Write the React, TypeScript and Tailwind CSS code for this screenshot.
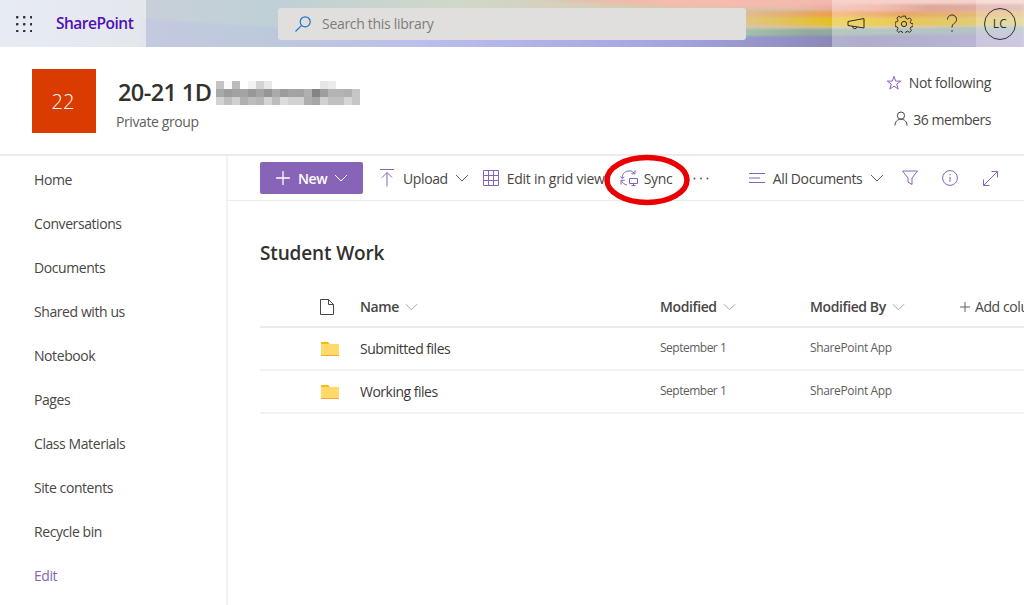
import { Plus } from "lucide-react";

const navItems = [
  "Home",
  "Conversations",
  "Documents",
  "Shared with us",
  "Notebook",
  "Pages",
  "Class Materials",
  "Site contents",
  "Recycle bin",
];

const rows = [
  { name: "Submitted files", modified: "September 1", by: "SharePoint App" },
  { name: "Working files", modified: "September 1", by: "SharePoint App" },
];

// mosaic over the redacted part of the site title (8px cells)
const mosaic = [
  ["#c4c4c4", "#fafafa", "#bcbcbc", "#ffffff", "#f2f2f2", "#d4d4d4", "#e8e8e8", "#ffffff", "#ffffff", "#ffffff", "#ffffff", "#ffffff", "#ffffff", "#e6e6e6", "#ececec", "#ffffff", "#ffffff", "#ffffff"],
  ["#a8a8a8", "#9c9c9c", "#a2a2a2", "#a4a4a4", "#989898", "#a4a4a4", "#969696", "#aaaaaa", "#9c9c9c", "#a4a4a4", "#a2a2a2", "#b0b0b0", "#848484", "#9e9e9e", "#b4b4b4", "#b4b4b4", "#b0b0b0", "#c6c6c6"],
  ["#d2d2d2", "#bebebe", "#d0d0d0", "#b0b0b0", "#bcbcbc", "#b6b6b6", "#d4d4d4", "#bcbcbc", "#dcdcdc", "#d2d2d2", "#d2d2d2", "#aeaeae", "#a6a6a6", "#d0d0d0", "#c0c0c0", "#c0c0c0", "#d6d6d6", "#c6c6c6"],
];

function HeaderArt() {
  return (
    <svg className="absolute inset-0" width="1024" height="47" viewBox="0 0 1024 47">
      <defs>
        <linearGradient id="base" x1="0" x2="1" y1="0" y2="0">
          <stop offset="0" stopColor="#cfd6e6" />
          <stop offset="0.14" stopColor="#c8d0da" />
          <stop offset="0.27" stopColor="#bfd0d6" />
          <stop offset="0.45" stopColor="#d0d8c8" />
          <stop offset="0.7" stopColor="#dcc4a8" />
          <stop offset="1" stopColor="#c8b8b0" />
        </linearGradient>
        <linearGradient id="warm" x1="0" x2="1" y1="0" y2="0">
          <stop offset="0.35" stopColor="#f0a890" stopOpacity="0" />
          <stop offset="0.6" stopColor="#f6bcae" />
          <stop offset="1" stopColor="#eeb8b0" />
        </linearGradient>
        <linearGradient id="salmon" x1="0" x2="1" y1="0" y2="0">
          <stop offset="0.55" stopColor="#f0a090" stopOpacity="0" />
          <stop offset="0.72" stopColor="#ee9c88" />
          <stop offset="0.82" stopColor="#cf7a68" />
          <stop offset="1" stopColor="#c88878" />
        </linearGradient>
        <linearGradient id="orange" x1="0" x2="1" y1="0" y2="0">
          <stop offset="0.5" stopColor="#eea050" stopOpacity="0" />
          <stop offset="0.7" stopColor="#f09c40" />
          <stop offset="0.8" stopColor="#dc7a1c" />
          <stop offset="1" stopColor="#dca040" />
        </linearGradient>
        <linearGradient id="gold" x1="0" x2="1" y1="0" y2="0">
          <stop offset="0.42" stopColor="#e8d060" stopOpacity="0" />
          <stop offset="0.7" stopColor="#e6be08" />
          <stop offset="0.81" stopColor="#dca800" />
          <stop offset="1" stopColor="#c8b850" />
        </linearGradient>
        <linearGradient id="teal" x1="0" x2="1" y1="0" y2="0">
          <stop offset="0.14" stopColor="#a8e0dc" stopOpacity="0" />
          <stop offset="0.27" stopColor="#aee6de" />
          <stop offset="0.55" stopColor="#b8f0c8" />
          <stop offset="0.75" stopColor="#92ac9c" />
          <stop offset="1" stopColor="#8aa0a8" />
        </linearGradient>
        <linearGradient id="lav" x1="0" x2="1" y1="0" y2="0">
          <stop offset="0.14" stopColor="#b8b8e8" stopOpacity="0.3" />
          <stop offset="0.3" stopColor="#bcc0ec" />
          <stop offset="0.6" stopColor="#a4a4e0" />
          <stop offset="0.82" stopColor="#8682b0" />
          <stop offset="1" stopColor="#9a92c4" />
        </linearGradient>
        <filter id="soft">
          <feGaussianBlur stdDeviation="0.9" />
        </filter>
      </defs>
      <rect width="1024" height="47" fill="url(#base)" />
      <g filter="url(#soft)">
        <path d="M140 -2 L1024 -2 L1024 8 C 860 8 660 10 520 -2 Z" fill="url(#warm)" />
        <path d="M500 -2 C 620 6 720 4 1024 4 L1024 14 C 860 14 680 14 500 -2 Z" fill="url(#salmon)" />
        <path d="M420 -2 C 560 8 680 12 1024 11 L1024 19 C 820 20 620 18 420 -2 Z" fill="url(#orange)" />
        <path d="M440 0 C 580 12 700 19 1024 17 L1024 26 C 820 28 620 28 440 0 Z" fill="url(#gold)" />
        <path d="M150 4 C 260 18 420 36 1024 26 L1024 36 C 700 42 340 44 150 12 Z" fill="url(#teal)" />
        <path d="M140 18 C 280 30 520 42 1024 33 L1024 50 L140 50 Z" fill="url(#lav)" />
      </g>
      <rect width="146" height="47" fill="#ffffff" fillOpacity="0.5" />
      <rect x="832" width="144" height="47" fill="#ffffff" fillOpacity="0.35" />
      <rect x="976" width="48" height="47" fill="#ffffff" fillOpacity="0.5" />
    </svg>
  );
}

function Waffle() {
  return (
    <svg width="16" height="16" viewBox="0 0 16 16" fill="#323130">
      {[1, 8, 15].map((y) =>
        [1, 8, 15].map((x) => <rect key={`${x}-${y}`} x={x - 1} y={y - 1} width="2.4" height="2.4" rx="0.6" />)
      )}
    </svg>
  );
}

function Line({ w, h, children, color = "#8764b8" }: { w: number; h: number; children: React.ReactNode; color?: string }) {
  return (
    <svg width={w} height={h} viewBox={`0 0 ${w} ${h}`} fill="none" stroke={color} strokeWidth="1" className="shrink-0">
      {children}
    </svg>
  );
}

function Chevron({ color = "#605e5c", size = 14 }: { color?: string; size?: number }) {
  return (
    <svg width={size} height="8" viewBox="0 0 14 8" fill="none" stroke={color} strokeWidth="1" className="shrink-0">
      <path d="M1 1l6 6 6-6" />
    </svg>
  );
}

export default function App() {
  return (
    <div className="relative h-[605px] w-[1024px] overflow-hidden bg-white font-['Open_Sans',sans-serif] text-[#323130]">
      {/* Suite bar */}
      <header className="relative flex h-[47px] items-center overflow-hidden">
        <HeaderArt />
        <div className="relative ml-[16px]">
          <Waffle />
        </div>
        <span className="relative ml-[24px] w-[222px] text-[15.5px] font-semibold tracking-[-0.5px] text-[#4f10b4]">SharePoint</span>
        <div className="relative flex h-[32px] w-[468px] items-center rounded-[3px] bg-[#e0dfdd]">
          <svg width="18" height="18" viewBox="0 0 18 18" fill="none" stroke="#1b78c8" strokeWidth="1.2" className="ml-[16px]">
            <circle cx="11.2" cy="6.8" r="5" />
            <path d="M7.6 10.4L1.5 16.5" />
          </svg>
          <span className="ml-[10px] text-[14px] tracking-[-0.3px] text-[#7d7c7a]">Search this library</span>
        </div>
        <div className="relative ml-auto flex items-center">
          <svg width="18" height="14" viewBox="0 0 18 14" fill="none" stroke="#2b2a29" strokeWidth="1" className="mr-[30px]">
            <path d="M1 4.5L17 1.5V11L1 8.5Z M5.5 9.5A2.3 2.3 0 0 0 10 10" />
          </svg>
          <svg width="18" height="18" viewBox="0 0 24 24" fill="none" stroke="#2b2a29" strokeWidth="1.3" className="mr-[33px]">
            <circle cx="12" cy="12" r="3.5" />
            <path d="M10.2 1.5h3.6l.6 3 2.2 1 2.6-1.6 2.5 2.5-1.6 2.6.9 2.1 3 .7v3.5l-3 .7-.9 2.2 1.6 2.6-2.5 2.4-2.6-1.6-2.2.9-.6 3h-3.6l-.7-3-2.1-.9-2.6 1.6-2.5-2.4 1.6-2.6-.9-2.2-3-.7V9.6l3-.7.9-2.1-1.6-2.6 2.5-2.5 2.6 1.6 2.1-1z" transform="translate(0.2 0) scale(1)" />
          </svg>
          <svg width="12" height="19" viewBox="0 0 12 19" fill="none" stroke="#2b2a29" strokeWidth="1" className="mr-[26px]">
            <path d="M1.5 5.5A4.5 4.5 0 1 1 8.5 9.2C7 10.2 6 11 6 13.5" />
            <circle cx="6" cy="17" r="0.8" fill="#2b2a29" stroke="none" />
          </svg>
          <div className="mr-[8px] flex size-[32px] items-center justify-center rounded-full border border-[#323130] text-[12px] tracking-[0.3px]">LC</div>
        </div>
      </header>

      {/* Site header */}
      <div className="flex h-[109px] border-b-2 border-[#edebe9] pl-[32px] pt-[22px]">
        <div className="flex size-[64px] shrink-0 items-center justify-center bg-[#da3b01] pr-[2px] pt-[2px] text-[20px] font-light text-white">22</div>
        <div className="ml-[22px]">
          <div className="flex items-center">
            <span className="mt-[2px] text-[23.5px] font-semibold leading-[42px] tracking-[-0.6px] text-[#323130]">20-21 1D</span>
            <svg width="144" height="24" className="ml-[5px] mt-[4px]" shapeRendering="crispEdges">
              {mosaic.map((row, y) =>
                row.map((c, x) => <rect key={`${x}-${y}`} x={x * 8} y={y * 8} width="8" height="8" fill={c} />)
              )}
            </svg>
          </div>
          <div className="-ml-[2px] -mt-[2px] text-[14px] tracking-[-0.4px] text-[#605e5c]">Private group</div>
        </div>
        <div className="ml-auto mr-[33px] flex flex-col items-end pt-[3px] text-[14px] tracking-[-0.35px] text-[#484644]">
          <div className="flex h-[20px] items-center">
            <svg width="16" height="16" viewBox="0 0 16 16" fill="none" stroke="#8764b8" strokeWidth="1" className="mr-[7px] mt-[2px]">
              <path d="M8 1.3l1.7 4.8h5l-4 3 1.5 5-4.2-3-4.2 3 1.5-5-4-3h5z" />
            </svg>
            Not following
          </div>
          <div className="mt-[17px] flex h-[20px] items-center tracking-[-0.45px]">
            <svg width="14" height="15" viewBox="0 0 14 15" fill="none" stroke="#484644" strokeWidth="1" className="mr-[5px] -mt-[2px]">
              <circle cx="7" cy="4.6" r="3.6" />
              <path d="M1 14.5c0-3.8 2.4-6.3 6-6.3s6 2.5 6 6.3" />
            </svg>
            36 members
          </div>
        </div>
      </div>

      <div className="flex">
        {/* Left nav */}
        <nav className="h-[449px] w-[228px] shrink-0 border-r-2 border-[#f3f2f1] pt-[1px]">
          {navItems.map((item) => (
            <div key={item} className="flex h-[44px] items-center pl-[34px] text-[14px] tracking-[-0.42px] text-[#484644]">
              {item}
            </div>
          ))}
          <div className="flex h-[44px] items-center pl-[34px] text-[14px] tracking-[-0.42px] text-[#8764b8]">Edit</div>
        </nav>

        <main className="min-w-0 flex-1">
          {/* Command bar */}
          <div className="flex h-[45px] items-center border-b border-[#edebe9] pl-[32px] text-[14px] tracking-[-0.38px] text-[#484644]">
            <button className="flex h-[32px] w-[103px] shrink-0 items-center rounded-[2px] bg-[#8764b8] pl-[12px] font-semibold text-white">
              <Plus size={22} strokeWidth={1.4} />
              <span className="ml-[4px]">New</span>
              <span className="ml-[7px]"><Chevron color="#ffffff" /></span>
            </button>
            <span className="ml-[17px]">
              <Line w={14} h={18}>
                <path d="M0 .5h14M7 17.5V3.5M2 8.5l5-5 5 5" />
              </Line>
            </span>
            <span className="ml-[9px]">Upload</span>
            <span className="ml-[7px]"><Chevron /></span>
            <span className="ml-[14px]">
              <Line w={16} h={16}>
                <path d="M.5.5h15v15H.5zM.5 5.5h15M.5 10.5h15M5.5 .5v15M10.5 .5v15" />
              </Line>
            </span>
            <span className="ml-[8px] w-[113px] whitespace-nowrap tracking-[-0.28px]">Edit in grid view</span>
            <Line w={18} h={16}>
              <path d="M2.2 8A7 7 0 0 1 14.5 3.2M15 .2v3.6h-3.6" />
              <path d="M.5 6.5L2.2 8.6 4.2 6.8" />
              <path d="M1.5 10.5c.9 2.4 3 4.2 5.5 4.5M1 14.6v-4.3h3.8" />
              <path d="M9.5 8.5h8v5h-8zM13.5 13.5v2M11.5 15.5h4" />
            </Line>
            <span className="ml-[6px] w-[49px]">Sync</span>
            <span className="w-[56px] text-[#605e5c]">
              <svg width="16" height="3" viewBox="0 0 16 3" fill="#605e5c">
                <circle cx="1.5" cy="1.5" r="1" />
                <circle cx="8" cy="1.5" r="1" />
                <circle cx="14.5" cy="1.5" r="1" />
              </svg>
            </span>
            <Line w={16} h={12}>
              <path d="M0 1.5h16M0 6h11M0 10.5h16" />
            </Line>
            <span className="ml-[8px]">All Documents</span>
            <span className="ml-[8px]"><Chevron /></span>
            <span className="ml-[18px]">
              <Line w={16} h={16}>
                <path d="M.5 1h15L10 8v6.5l-4-2.5V8z" />
              </Line>
            </span>
            <span className="ml-[24px]">
              <Line w={16} h={16}>
                <circle cx="8" cy="8" r="7.4" />
                <path d="M8 7v5M8 4v1.4" />
              </Line>
            </span>
            <span className="ml-[25px]">
              <Line w={15} h={15}>
                <path d="M14.5 .5L.5 14.5M8.5 .5h6v6M.5 8.5v6h6" />
              </Line>
            </span>
          </div>

          {/* Library */}
          <div className="pl-[32px]">
            <h1 className="mt-[37px] h-[30px] text-[19px] font-semibold leading-[30px] tracking-[-0.15px] text-[#323130]">Student Work</h1>
            <div className="mt-[21px] flex h-[39px] items-center border-b-2 border-[#edebe9] pb-[2px] text-[14px] font-semibold tracking-[-0.4px] text-[#484644]">
              <span className="ml-[60px] w-[40px] shrink-0">
                <svg width="14" height="16" viewBox="0 0 14 16" fill="none" stroke="#484644" strokeWidth="1">
                  <path d="M.5.5h8l5 5v10H.5zM8.5.5v5h5" />
                </svg>
              </span>
              <span className="flex w-[300px] shrink-0 items-center gap-[6px]">Name <Chevron color="#a19f9d" size={13} /></span>
              <span className="flex w-[150px] shrink-0 items-center gap-[6px]">Modified <Chevron color="#a19f9d" size={13} /></span>
              <span className="flex w-[150px] shrink-0 items-center gap-[6px]">Modified By <Chevron color="#a19f9d" size={13} /></span>
              <span className="flex shrink-0 items-center whitespace-nowrap font-normal">
                <svg width="10" height="10" viewBox="0 0 10 10" stroke="#605e5c" strokeWidth="1" className="mr-[5px]">
                  <path d="M5 0v10M0 5h10" />
                </svg>
                Add column
              </span>
            </div>
            {rows.map((row) => (
              <div key={row.name} className="flex h-[43px] items-center border-b-2 border-[#f3f2f1] text-[14px] tracking-[-0.5px]">
                <span className="ml-[61px] w-[39px]">
                  <svg width="18" height="14" viewBox="0 0 18 14">
                    <path d="M0 1a1 1 0 0 1 1-1h6l2 2h9v12H0z" fill="#ffb900" />
                    <rect y="2" width="18" height="11" fill="#ffd96a" />
                    <rect y="13" width="18" height="1" fill="#f4a938" />
                  </svg>
                </span>
                <span className="w-[300px] text-[#3b3a39]">{row.name}</span>
                <span className="-mt-[1px] w-[150px] text-[12px] tracking-[-0.5px] text-[#605e5c]">{row.modified}</span>
                <span className="-mt-[1px] text-[12px] tracking-[-0.35px] text-[#605e5c]">{row.by}</span>
              </div>
            ))}
          </div>
        </main>
      </div>

      {/* Red annotation drawn over the screenshot */}
      <svg className="pointer-events-none absolute left-[600px] top-[150px]" width="96" height="60" viewBox="0 0 96 60" fill="none">
        <ellipse cx="47" cy="30" rx="40" ry="22.5" stroke="#ea0000" strokeWidth="5.5" />
      </svg>
    </div>
  );
}
